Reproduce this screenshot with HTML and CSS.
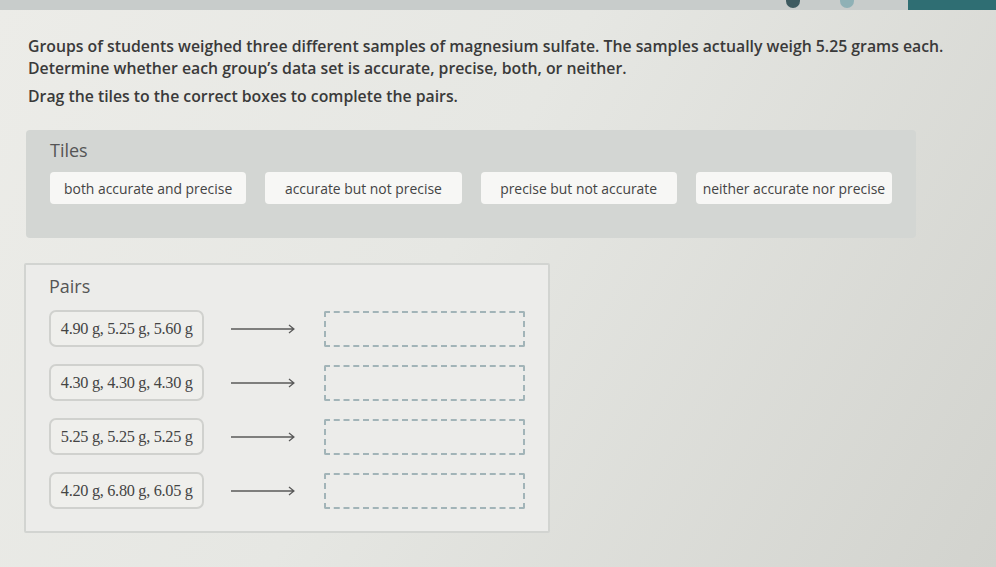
FILE: index.html
```html
<!DOCTYPE html>
<html lang="en">
<head>
  <meta charset="UTF-8" />
  <title>Accuracy and Precision - Pairs</title>
  <link rel="stylesheet" href="styles.css">
</head>
<body>

  <!-- top toolbar strip -->
  <div class="topbar">
    <span class="dot dot-dark"></span>
    <span class="dot dot-light"></span>
    <span class="topbar-btn"></span>
  </div>

  <div class="question">
    <p class="prompt">Groups of students weighed three different samples of magnesium sulfate. The samples actually weigh 5.25 grams each. Determine whether each group’s data set is accurate, precise, both, or neither.</p>
    <p class="prompt">Drag the tiles to the correct boxes to complete the pairs.</p>
  </div>

  <!-- Tiles -->
  <div class="tiles-box">
    <h2>Tiles</h2>
    <div class="tile-row">
      <div class="tile">both accurate and precise</div>
      <div class="tile">accurate but not precise</div>
      <div class="tile">precise but not accurate</div>
      <div class="tile">neither accurate nor precise</div>
    </div>
  </div>

  <!-- Pairs -->
  <div class="pairs-box">
    <h2>Pairs</h2>

    <div class="pair">
      <div class="data">4.90 g, 5.25 g, 5.60 g</div>
      <svg class="arrow" width="70" height="12" viewBox="0 0 70 12"><path d="M2 6H66M61 2L66 6L61 10" fill="none" stroke="#5a5a5a" stroke-width="1.3"/></svg>
      <div class="drop"></div>
    </div>

    <div class="pair">
      <div class="data">4.30 g, 4.30 g, 4.30 g</div>
      <svg class="arrow" width="70" height="12" viewBox="0 0 70 12"><path d="M2 6H66M61 2L66 6L61 10" fill="none" stroke="#5a5a5a" stroke-width="1.3"/></svg>
      <div class="drop"></div>
    </div>

    <div class="pair">
      <div class="data">5.25 g, 5.25 g, 5.25 g</div>
      <svg class="arrow" width="70" height="12" viewBox="0 0 70 12"><path d="M2 6H66M61 2L66 6L61 10" fill="none" stroke="#5a5a5a" stroke-width="1.3"/></svg>
      <div class="drop"></div>
    </div>

    <div class="pair">
      <div class="data">4.20 g, 6.80 g, 6.05 g</div>
      <svg class="arrow" width="70" height="12" viewBox="0 0 70 12"><path d="M2 6H66M61 2L66 6L61 10" fill="none" stroke="#5a5a5a" stroke-width="1.3"/></svg>
      <div class="drop"></div>
    </div>
  </div>

</body>
</html>
```

FILE: styles.css
```css
body {
  margin: 0;
  height: 567px;
  overflow: hidden;
  font-family: 'Open Sans', sans-serif;
  color: #333;
  background: linear-gradient(120deg, #ecece8 0%, #e6e7e3 45%, #d2d3ce 100%);
}

.topbar {
  height: 10px;
  background: #c8cccb;
  position: relative;
}

.dot {
  position: absolute;
  top: -6px;
  width: 14px;
  height: 14px;
  border-radius: 50%;
}

.dot-dark {
  left: 786px;
  background: #3d5a60;
}

.dot-light {
  left: 840px;
  background: #8fb1b6;
}

.topbar-btn {
  position: absolute;
  right: 0;
  top: 0;
  width: 88px;
  height: 10px;
  background: #2f6e73;
}

.question {
  padding: 25px 0 0 28px;
}

.prompt {
  margin: 0 0 6px;
  font-size: 15.8px;
  font-weight: 600;
  line-height: 22px;
  color: #3a3a3a;
  max-width: 940px;
}

h2 {
  margin: 0;
  font-size: 18px;
  font-weight: 400;
  color: #555;
}

.tiles-box {
  margin: 23px 0 0 26px;
  width: 890px;
  height: 108px;
  box-sizing: border-box;
  padding: 8px 24px;
  background: #d3d6d3;
  border-radius: 4px;
}

.tile-row {
  display: flex;
  gap: 19px;
  margin-top: 10px;
}

.tile {
  width: 198px;
  height: 32px;
  display: flex;
  align-items: center;
  justify-content: center;
  background: #f7f7f5;
  border-radius: 4px;
  font-size: 13.9px;
  color: #444;
}

.pairs-box {
  margin: 25px 0 0 24px;
  width: 526px;
  height: 270px;
  box-sizing: border-box;
  padding: 9px 23px;
  background: #ececea;
  border: 2px solid #d2d4d1;
  border-radius: 2px;
}

.pairs-box h2 {
  margin-bottom: 12px;
}

.pair {
  display: flex;
  align-items: center;
  height: 37px;
  margin-bottom: 17px;
}

.data {
  width: 158px;
  height: 37px;
  box-sizing: border-box;
  display: flex;
  align-items: center;
  justify-content: center;
  border: 2px solid #d0d1ce;
  border-radius: 7px;
  background: #efefec;
  font-family: 'Liberation Serif', serif;
  font-size: 16.3px;
  color: #444;
  letter-spacing: -0.3px;
}

.arrow {
  margin-left: 25px;
}

.drop {
  margin-left: 26px;
  width: 204px;
  height: 36px;
  box-sizing: border-box;
  border: 2px dashed #a2b4b8;
  border-radius: 2px;
}
```
